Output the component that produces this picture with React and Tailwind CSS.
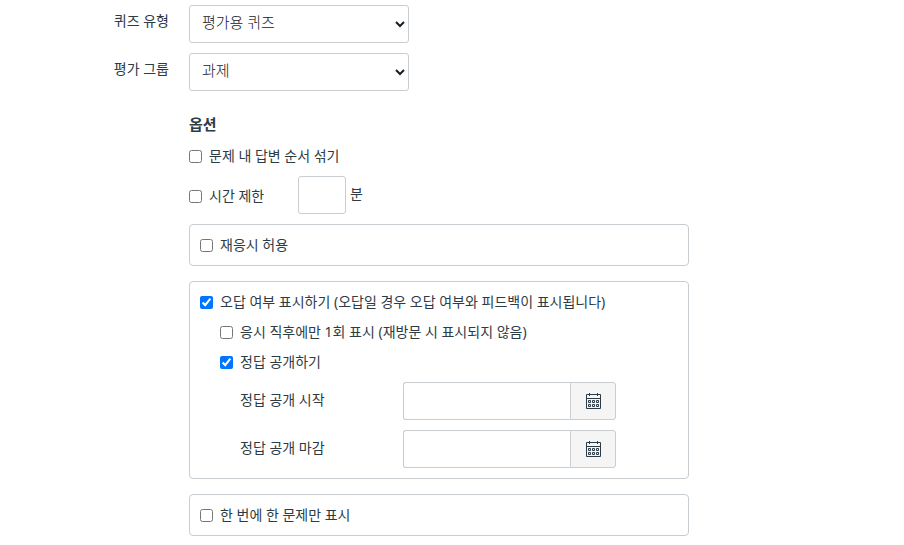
import { useState } from 'react'

function Check({ label, defaultChecked }) {
  return (
    <label className="flex items-center gap-[7px]">
      <input type="checkbox" defaultChecked={defaultChecked} className="h-[13px] w-[13px] shrink-0" />
      <span>{label}</span>
    </label>
  )
}

function SelectRow({ id, label, options }) {
  return (
    <div className="flex">
      <label htmlFor={id} className="w-[169px] shrink-0 pt-[6px] text-right">
        {label}
      </label>
      <select
        id={id}
        className="ml-5 h-[38px] w-full max-w-[220px] rounded-[3px] border border-[#c7cdd1] bg-white pb-1 pl-2 text-[15px] font-light text-[#14202a]"
      >
        {options.map((option) => (
          <option key={option}>{option}</option>
        ))}
      </select>
    </div>
  )
}

function CalendarIcon() {
  return (
    <svg width="16" height="16" viewBox="0 0 16 16" fill="none" stroke="#2d3b45" aria-hidden="true">
      <path d="M1.5 1.5h14v14h-14zM1.5 5.5h14M4.5 0v3M12.5 0v3" />
      <path d="M3.5 7.5h2v2h-2zM7.5 7.5h2v2h-2zM11.5 7.5h2v2h-2zM3.5 11.5h2v2h-2zM7.5 11.5h2v2h-2zM11.5 11.5h2v2h-2z" />
    </svg>
  )
}

function DateRow({ id, label }) {
  const [value, setValue] = useState('')

  return (
    <div className="flex">
      <label htmlFor={id} className="w-[163px] shrink-0 pt-2">
        {label}
      </label>
      <div className="flex h-[38px] w-full max-w-[213px]">
        <input
          id={id}
          type="text"
          value={value}
          onChange={(e) => setValue(e.target.value)}
          className="min-w-0 flex-1 rounded-l-[3px] border border-r-0 border-[#c7cdd1] px-2"
        />
        <button
          type="button"
          aria-label={label}
          className="flex w-[46px] items-center justify-center rounded-r-[3px] border border-[#c7cdd1] bg-[#f5f5f5]"
        >
          <CalendarIcon />
        </button>
      </div>
    </div>
  )
}

export default function App() {
  return (
    <form className="bg-white pt-[5px] pb-2 font-['Noto_Sans','Noto_Sans_CJK_KR',sans-serif] text-sm text-[#2d3b45]">
      <div className="space-y-[10px]">
        <SelectRow id="quiz-type" label="퀴즈 유형" options={['평가용 퀴즈']} />
        <SelectRow id="group" label="평가 그룹" options={['과제']} />
      </div>

      <div className="mt-[23px] ml-[189px] max-w-[500px]">
        <h3 className="text-[15px] leading-5 font-bold">옵션</h3>
        <div className="mt-3">
          <Check label="문제 내 답변 순서 섞기" />
        </div>
        <div className="mt-[10px] flex">
          <div className="w-[109px] pt-[10px]">
            <Check label="시간 제한" />
          </div>
          <label className="flex gap-1">
            <input type="text" className="h-[38px] w-12 rounded-[3px] border border-[#c7cdd1] px-2" />
            <span className="pt-2">분</span>
          </label>
        </div>

        <div className="mt-[10px] rounded border border-[#c7cdd1] p-[10px]">
          <Check label="재응시 허용" />
        </div>

        <div className="mt-[15px] rounded border border-[#c7cdd1] p-[10px]">
          <Check label="오답 여부 표시하기 (오답일 경우 오답 여부와 피드백이 표시됩니다)" defaultChecked />
          <div className="mt-[10px] ml-5 space-y-[10px]">
            <Check label="응시 직후에만 1회 표시 (재방문 시 표시되지 않음)" />
            <Check label="정답 공개하기" defaultChecked />
            <div className="ml-5 space-y-[10px]">
              <DateRow id="show-from" label="정답 공개 시작" />
              <DateRow id="show-until" label="정답 공개 마감" />
            </div>
          </div>
        </div>

        <div className="mt-[15px] rounded border border-[#c7cdd1] p-[10px]">
          <Check label="한 번에 한 문제만 표시" />
        </div>
      </div>
    </form>
  )
}
